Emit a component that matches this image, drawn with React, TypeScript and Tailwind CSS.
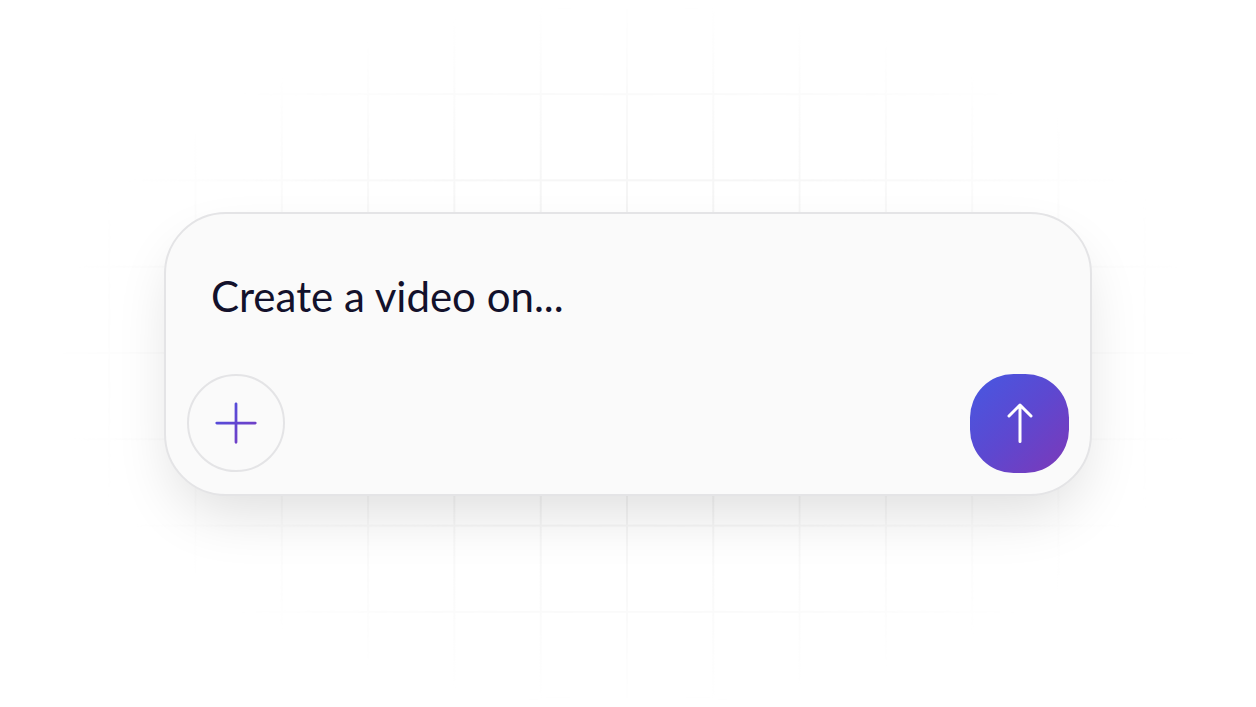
import { Plus, ArrowUp } from 'lucide-react';

const PromptCard = () => {
  return (
    <div className="relative z-10 flex h-[284px] w-[928px] flex-col justify-between rounded-[62px] border-2 border-[#e4e4e6] bg-[#fafafa] p-[21px] shadow-[0_26px_60px_-12px_rgba(0,0,0,0.14)]">
      <p className="pl-[24px] pt-[37px] font-['Lato',sans-serif] text-[42px] leading-[48px] text-[#13112b]">
        Create a video on...
      </p>
      <div className="flex items-center justify-between">
        <button className="flex h-[98px] w-[98px] items-center justify-center rounded-full border-2 border-[#e4e4e6] bg-[#fafafa]">
          <svg width="44" height="44" viewBox="0 0 24 24" fill="none">
            <defs>
              <linearGradient id="plusGrad" x1="0" y1="0" x2="1" y2="1">
                <stop offset="0%" stopColor="#4b50e0" />
                <stop offset="100%" stopColor="#7a3bc0" />
              </linearGradient>
            </defs>
            <path d="M12 1.5v21M1.5 12h21" stroke="url(#plusGrad)" strokeWidth="1.5" strokeLinecap="round" />
          </svg>
        </button>
        <button className="flex h-[99px] w-[99px] items-center justify-center rounded-[44%] bg-[linear-gradient(135deg,#4658e2_0%,#5d48d0_50%,#7d38b8_100%)]">
          <svg width="28" height="42" viewBox="0 0 28 42" fill="none">
            <path d="M14 39.5V3M3 14L14 3l11 11" stroke="white" strokeWidth="3" strokeLinecap="round" strokeLinejoin="round" />
          </svg>
        </button>
      </div>
    </div>
  );
};

export default function App() {
  return (
    <div className="relative flex h-screen w-full items-center justify-center overflow-hidden bg-white">
      <div className="absolute inset-0 bg-[linear-gradient(to_right,#f3f3f3_2px,transparent_2px),linear-gradient(to_bottom,#f3f3f3_2px,transparent_2px)] bg-[size:86.3px_86.3px] bg-[position:626px_352px] [mask-image:radial-gradient(ellipse_46%_50%_at_50%_50%,black_35%,transparent_100%)]" />
      <PromptCard />
    </div>
  );
}
